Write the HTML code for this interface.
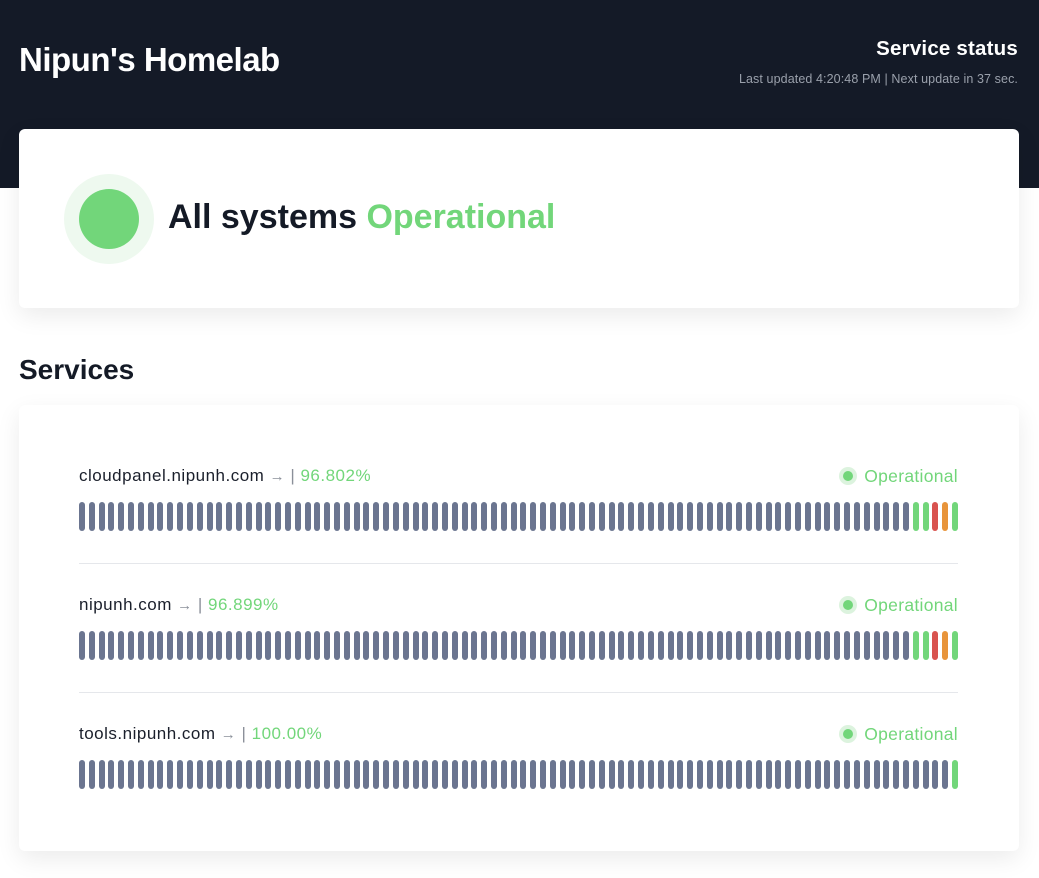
<!DOCTYPE html>
<html><head><meta charset="utf-8"><style>
*{box-sizing:border-box;margin:0;padding:0}
body{width:1039px;height:878px;overflow:hidden;background:#fff;font-family:"Liberation Sans",sans-serif;position:relative;color:#141a26}
.hdr{position:absolute;left:0;top:0;width:1039px;height:188px;background:#141a27}
.title{position:absolute;left:19px;top:41px;color:#fff;font-size:33px;font-weight:bold;letter-spacing:-0.5px}
.ss{position:absolute;right:21px;top:37px;color:#fff;font-size:20.5px;font-weight:bold;letter-spacing:0.2px}
.lu{position:absolute;right:21px;top:72px;color:#9aa0ab;font-size:12.5px;letter-spacing:0.1px}
.card{position:absolute;left:19px;width:1000px;background:#fff;border-radius:6px;box-shadow:0 8px 24px rgba(0,0,0,0.08)}
.c1{top:129px;height:179px}
.halo{position:absolute;left:45px;top:45px;width:90px;height:90px;border-radius:50%;background:#eef9ef}
.dot{position:absolute;left:15px;top:15px;width:60px;height:60px;border-radius:50%;background:#72d67a}
.all{position:absolute;left:149px;top:69px;font-size:34px;font-weight:bold}
.all span{color:#72d67a}
.svc{position:absolute;left:19px;top:354px;font-size:28px;font-weight:bold}
.c2{top:405px;height:446px}
.row{position:absolute;left:60px;width:879px}
.name{position:absolute;left:0;top:0;font-size:17px;color:#1a1f2b;letter-spacing:0.5px}
.name .a{color:#8a8f99;font-size:15px}
.name .p{color:#72d67a}
.name .s{color:#8a8f99}
.st{position:absolute;right:0;top:0;font-size:17.5px;color:#72d67a;letter-spacing:0.3px}
.st i{display:inline-block;width:18px;height:18px;border-radius:50%;background:#dcf3de;vertical-align:-3px;margin-right:7px;position:relative}
.st i:after{content:"";position:absolute;left:4px;top:4px;width:10px;height:10px;border-radius:50%;background:#72d67a}
.bars{position:absolute;left:0;top:36px;width:879px;height:29px}
.bars b{position:absolute;top:0;width:6px;height:29px;border-radius:3px;background:#6b7590}
.bars b.g{background:#72d67a}.bars b.r{background:#d9534f}.bars b.o{background:#e8943a}
.hr{position:absolute;left:60px;width:879px;height:1px;background:#e5e7eb}
</style></head><body>
<div class="hdr"></div>
<div class="title">Nipun's Homelab</div>
<div class="ss">Service status</div>
<div class="lu">Last updated 4:20:48 PM | Next update in 37 sec.</div>
<div class="card c1"><div class="halo"><div class="dot"></div></div><div class="all">All systems <span>Operational</span></div></div>
<div class="svc">Services</div>
<div class="card c2">
<div class="row" style="top:61px"><div class="name">cloudpanel.nipunh.com <span class="a">→</span> <span class="s">|</span> <span class="p">96.802%</span></div><div class="st"><i></i>Operational</div><div class="bars" id="b1"></div></div>
<div class="hr" style="top:158px"></div>
<div class="row" style="top:190px"><div class="name">nipunh.com <span class="a">→</span> <span class="s">|</span> <span class="p">96.899%</span></div><div class="st"><i></i>Operational</div><div class="bars" id="b2"></div></div>
<div class="hr" style="top:287px"></div>
<div class="row" style="top:319px"><div class="name">tools.nipunh.com <span class="a">→</span> <span class="s">|</span> <span class="p">100.00%</span></div><div class="st"><i></i>Operational</div><div class="bars" id="b3"></div></div>
</div>
<script>
function fill(id,tail){var h='';var n=90;for(var i=0;i<n;i++){var c=i>=n-tail.length?tail[i-(n-tail.length)]:'';h+='<b class="'+c+'" style="left:'+Math.round(i*873/89)+'px"></b>';}document.getElementById(id).innerHTML=h;}
fill('b1',['g','g','r','o','g']);fill('b2',['g','g','r','o','g']);fill('b3',['g']);
</script>
</body></html>
